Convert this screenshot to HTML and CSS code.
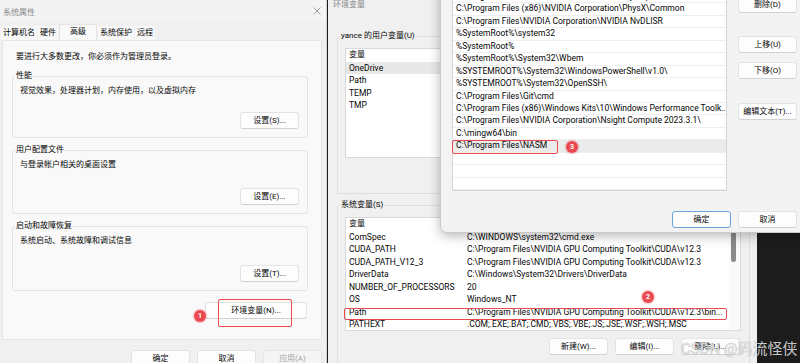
FILE: index.html
```html
<!DOCTYPE html>
<html lang="zh-CN">
<head>
<meta charset="utf-8">
<title>环境变量</title>
<link rel="stylesheet" href="styles.css">
</head>
<body>
<div class="desktop">

  <section class="win win-sys">
    <header class="titlebar">
      <span class="title">系统属性</span>
      <svg class="close" width="8" height="8" viewBox="0 0 8 8"><path d="M0.5 0.5L7.5 7.5M7.5 0.5L0.5 7.5" stroke="#8a8a8a" stroke-width="0.8" fill="none"/></svg>
    </header>
    <nav class="tabs">
      <span class="tab">计算机名</span>
      <span class="tab">硬件</span>
      <span class="tab tab-active">高级</span>
      <span class="tab">系统保护</span>
      <span class="tab">远程</span>
    </nav>
    <div class="panel">
      <p class="notice">要进行大多数更改，你必须作为管理员登录。</p>
      <div class="group g-perf">
        <span class="group-title">性能</span>
        <span class="group-desc">视觉效果，处理器计划，内存使用，以及虚拟内存</span>
        <button class="btn">设置(S)...</button>
      </div>
      <div class="group g-profile">
        <span class="group-title">用户配置文件</span>
        <span class="group-desc">与登录帐户相关的桌面设置</span>
        <button class="btn">设置(E)...</button>
      </div>
      <div class="group g-startup">
        <span class="group-title">启动和故障恢复</span>
        <span class="group-desc">系统启动、系统故障和调试信息</span>
        <button class="btn">设置(T)...</button>
      </div>
      <button class="btn btn-env">环境变量(N)...</button>
    </div>
    <footer class="dlg-footer">
      <button class="btn">确定</button>
      <button class="btn">取消</button>
      <button class="btn btn-disabled">应用(A)</button>
    </footer>
  </section>

  <section class="win win-env">
    <div class="win-title">环境变量</div>
    <div class="vgroup g-user">
      <span class="group-title">yance 的用户变量(U)</span>
      <div class="listview lv-user">
        <div class="lv-row lv-head"><span class="lv-name">变量</span></div>
        <div class="lv-row lv-sel"><span class="lv-name">OneDrive</span></div>
        <div class="lv-row"><span class="lv-name">Path</span></div>
        <div class="lv-row"><span class="lv-name">TEMP</span></div>
        <div class="lv-row"><span class="lv-name">TMP</span></div>
      </div>
    </div>
    <div class="vgroup g-system">
      <span class="group-title">系统变量(S)</span>
      <div class="listview lv-system">
        <div class="lv-rows">
          <div class="lv-row lv-head"><span class="lv-name">变量</span><span class="lv-value">值</span></div>
          <div class="lv-row"><span class="lv-name">ComSpec</span><span class="lv-value">C:\WINDOWS\system32\cmd.exe</span></div>
          <div class="lv-row"><span class="lv-name">CUDA_PATH</span><span class="lv-value">C:\Program Files\NVIDIA GPU Computing Toolkit\CUDA\v12.3</span></div>
          <div class="lv-row"><span class="lv-name">CUDA_PATH_V12_3</span><span class="lv-value">C:\Program Files\NVIDIA GPU Computing Toolkit\CUDA\v12.3</span></div>
          <div class="lv-row"><span class="lv-name">DriverData</span><span class="lv-value">C:\Windows\System32\Drivers\DriverData</span></div>
          <div class="lv-row"><span class="lv-name">NUMBER_OF_PROCESSORS</span><span class="lv-value">20</span></div>
          <div class="lv-row"><span class="lv-name">OS</span><span class="lv-value">Windows_NT</span></div>
          <div class="lv-row"><span class="lv-name">Path</span><span class="lv-value">C:\Program Files\NVIDIA GPU Computing Toolkit\CUDA\v12.3\bin...</span></div>
          <div class="lv-row"><span class="lv-name">PATHEXT</span><span class="lv-value">.COM;.EXE;.BAT;.CMD;.VBS;.VBE;.JS;.JSE;.WSF;.WSH;.MSC</span></div>
        </div>
        <div class="vscroll"><div class="thumb"></div></div>
      </div>
      <div class="btn-row">
        <button class="btn">新建(W)...</button>
        <button class="btn">编辑(I)...</button>
        <button class="btn">删除(L)...</button>
      </div>
    </div>
  </section>

  <section class="win win-edit">
    <div class="edit-list">
      <div class="er">C:\Program Files\Common Files\Oracle\Java\javapath</div>
      <div class="er">C:\Program Files (x86)\NVIDIA Corporation\PhysX\Common</div>
      <div class="er">C:\Program Files\NVIDIA Corporation\NVIDIA NvDLISR</div>
      <div class="er">%SystemRoot%\system32</div>
      <div class="er">%SystemRoot%</div>
      <div class="er">%SystemRoot%\System32\Wbem</div>
      <div class="er">%SYSTEMROOT%\System32\WindowsPowerShell\v1.0\</div>
      <div class="er">%SYSTEMROOT%\System32\OpenSSH\</div>
      <div class="er">C:\Program Files\Git\cmd</div>
      <div class="er">C:\Program Files (x86)\Windows Kits\10\Windows Performance Toolk...</div>
      <div class="er">C:\Program Files\NVIDIA Corporation\Nsight Compute 2023.3.1\</div>
      <div class="er">C:\mingw64\bin</div>
      <div class="er er-sel">C:\Program Files\NASM</div>
      <div class="er"></div>
      <div class="er"></div>
      <div class="er"></div>
    </div>
    <div class="side-btns">
      <button class="btn b-del">删除(D)</button>
      <button class="btn b-up">上移(U)</button>
      <button class="btn b-down">下移(O)</button>
      <button class="btn b-text">编辑文本(T)...</button>
    </div>
    <footer class="edit-footer">
      <button class="btn btn-default">确定</button>
      <button class="btn">取消</button>
    </footer>
  </section>

  <div class="mark mark-1"></div>
  <div class="badge badge-1">1</div>
  <div class="mark mark-2"></div>
  <div class="badge badge-2">2</div>
  <div class="mark mark-3"></div>
  <div class="badge badge-3">3</div>
  <div class="watermark">CSDN @码流怪侠</div>
</div>
</body>
</html>
```
FILE: styles.css
```css
* { box-sizing: border-box; }
html, body { margin: 0; padding: 0; }
body {
  width: 800px;
  height: 363px;
  overflow: hidden;
  font-family: Roboto, "Noto Sans CJK SC", sans-serif;
  font-size: 8px;
  color: #050505;
}
p { margin: 0; }

.desktop {
  position: relative;
  width: 800px;
  height: 363px;
  overflow: hidden;
  background: #1c1c1c;
}
.win { position: absolute; }

/* ---------- buttons ---------- */
.btn {
  font: inherit;
  font-size: 8px;
  width: 59px;
  height: 17px;
  line-height: 15px;
  padding: 0;
  background: #fdfdfd;
  border: 1px solid #e3e3e3;
  border-bottom-color: #d2d2d2;
  border-radius: 3px;
  color: #050505;
  text-align: center;
  white-space: nowrap;
  flex: none;
}
.btn-disabled { color: #a3a3a3; background: #f5f5f5; border-color: #e6e6e6; }
.btn-default { border-color: #6aa3dc; }

/* ---------- system properties window ---------- */
.win-sys {
  left: 0;
  top: 0;
  width: 327px;
  height: 372px;
  background: #f0f0f0;
  border-right: 1px solid #d5d5d5;
  display: flex;
  flex-direction: column;
}
.titlebar {
  height: 22px;
  flex: none;
  display: flex;
  align-items: center;
  justify-content: space-between;
  padding: 0 5px 0 3px;
  color: #8a8a8a;
  background: #f3f3f3;
}
.tabs {
  height: 18px;
  flex: none;
  display: flex;
  align-items: flex-end;
  padding-left: 1px;
}
.tab {
  height: 14px;
  line-height: 14px;
  padding: 0 2px;
  margin-right: 1px;
  background: #f7f7f7;
}
.tab-active {
  height: 16px;
  line-height: 14px;
  padding: 0 10px;
  background: #f9f9f9;
  border: 1px solid #e4e4e4;
  border-bottom: 0;
}
.panel {
  margin-left: 2px;
  width: 320px;
  height: 300px;
  flex: none;
  background: #f9f9f9;
  border: 1px solid #e4e4e4;
  border-top-color: #e8e8e8;
  padding: 11px 13px 0 9px;
  display: flex;
  flex-direction: column;
}
.notice { margin-left: 4px; line-height: 10px; }
.group {
  border: 1px solid #e3e3e3;
  border-radius: 3px;
  display: flex;
  flex-direction: column;
  align-items: flex-start;
  padding: 0 8px 8px 7px;
}
.group-title {
  margin: -6px 0 0 -5px;
  padding: 0 1px;
  line-height: 10px;
  background: #f9f9f9;
}
.group-desc { margin-top: 5px; line-height: 10px; }
.group .btn { margin-top: auto; align-self: flex-end; }
.g-perf { margin-top: 14px; height: 62px; }
.g-profile { margin-top: 12px; height: 64px; }
.g-startup { margin-top: 12px; height: 65px; }
.btn-env { width: 102px; margin: 11px 1px 0 0; align-self: flex-end; }
.dlg-footer {
  display: flex;
  justify-content: flex-end;
  gap: 7px;
  padding: 10px 4px 0 0;
}

/* ---------- environment variables window ---------- */
.win-env {
  left: 328px;
  top: 0;
  width: 429px;
  height: 372px;
  background: #f0f0f0;
  display: flex;
  flex-direction: column;
}
.win-title {
  line-height: 10px;
  padding-left: 5px;
  color: #8a8a8a;
}
.vgroup {
  margin: 0 7px 0 9px;
  border: 1px solid #dedede;
  border-radius: 3px;
  padding: 0 8px 0 7px;
  display: flex;
  flex-direction: column;
  align-items: stretch;
}
.vgroup .group-title { align-self: flex-start; background: #f0f0f0; }
.g-user { margin-top: 26px; height: 161px; }
.g-system { margin-top: 11px; height: 170px; }

.listview {
  margin-top: 7px;
  background: #fff;
  border: 1px solid #d9d9d9;
  overflow: hidden;
  font-size: 8.5px;
}
.lv-user { height: 110px; }
.lv-system { height: 114px; display: flex; }
.lv-rows { flex: 1; min-width: 0; }
.lv-row {
  display: flex;
  height: 12.5px;
  line-height: 12.5px;
  padding-left: 3px;
  white-space: nowrap;
}
.lv-head { font-size: 8px; }
.lv-sel { background: #e8e8e8; }
.lv-name { width: 118px; flex: none; overflow: hidden; text-overflow: ellipsis; }
.lv-value { flex: 1; min-width: 0; overflow: hidden; text-overflow: ellipsis; }
.vscroll {
  width: 11px;
  flex: none;
  padding: 14px 0 0 2px;
  background: #fafafa;
}
.thumb { width: 5px; height: 30px; border-radius: 3px; background: #8a8a8a; }
.btn-row {
  display: flex;
  justify-content: flex-end;
  gap: 7px;
  margin: 7px 1px 0 0;
}

/* ---------- edit environment variable window ---------- */
.win-edit {
  left: 440px;
  top: -40px;
  width: 370px;
  height: 273px;
  background: #f3f3f3;
  border: 1px solid #c9c9c9;
  border-radius: 0 0 0 7px;
  box-shadow: 0 3px 12px rgba(0, 0, 0, 0.28);
  padding: 29px 0 0 11px;
  display: grid;
  grid-template-columns: 275px 59px;
  grid-template-rows: auto auto;
  column-gap: 11px;
  align-items: start;
}
.edit-list {
  height: 201px;
  background: #fff;
  border: 1px solid #d4d4d4;
  overflow: hidden;
  font-size: 8.5px;
}
.er {
  height: 12.45px;
  line-height: 11.45px;
  border-bottom: 1px solid #efefef;
  padding-left: 3px;
  white-space: nowrap;
  overflow: hidden;
}
.er-sel { background: #ebebeb; }
.side-btns { display: flex; flex-direction: column; }
.b-del { margin-top: 6px; }
.b-up { margin-top: 23px; }
.b-down { margin-top: 9px; }
.b-text { margin-top: 24px; }
.edit-footer {
  grid-column: 1 / -1;
  display: flex;
  justify-content: flex-end;
  gap: 7px;
  margin-top: 15px;
}

/* ---------- annotations ---------- */
.mark {
  position: absolute;
  border: 1.5px solid #ea4a50;
  border-radius: 2px;
}
.mark-1 { left: 218px; top: 299px; width: 74px; height: 28px; }
.mark-2 { left: 344px; top: 308px; width: 383px; height: 12px; }
.mark-3 { left: 452px; top: 140px; width: 106px; height: 14px; }
.badge {
  position: absolute;
  width: 12px;
  height: 12px;
  border-radius: 50%;
  background: #ea4950;
  box-shadow: 0 0 0 1.5px rgba(234, 73, 80, 0.22);
  color: #fff;
  font-size: 7px;
  font-weight: bold;
  line-height: 12px;
  text-align: center;
}
.badge-1 { left: 194px; top: 310px; }
.badge-2 { left: 642px; top: 291px; }
.badge-3 { left: 566px; top: 141px; }
.watermark {
  position: absolute;
  left: 681px;
  top: 340px;
  font-size: 15px;
  line-height: 18px;
  white-space: nowrap;
  color: rgba(232, 232, 232, 0.85);
  text-shadow: 0 0 1px rgba(0, 0, 0, 0.35);
}
```
